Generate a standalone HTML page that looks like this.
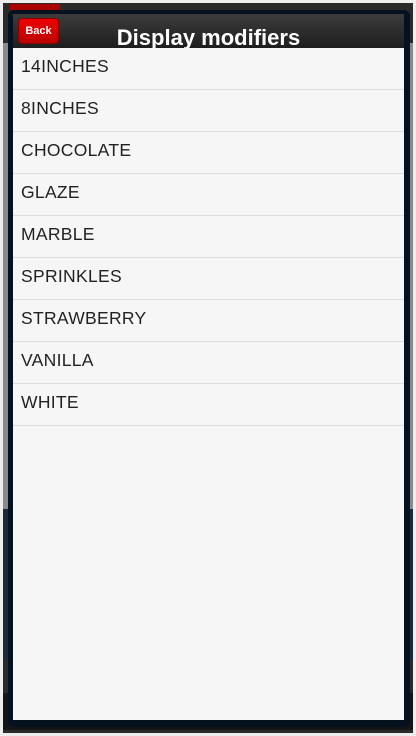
<!DOCTYPE html>
<html><head><style>
*{margin:0;padding:0;box-sizing:border-box}
body{width:416px;height:736px;background:#eee;position:relative;overflow:hidden;font-family:"Liberation Sans",Arial,sans-serif}
.bg{position:absolute;left:3px;top:3px;width:410px;height:730px;background:#2a2a2a}
.bg .mid{position:absolute;left:0;top:40px;width:410px;height:466px;background:#8a8a8a}
.bg .low{position:absolute;left:0;top:506px;width:410px;height:150px;background:#1b2a3a}
.bg .foot{position:absolute;left:0;top:690px;width:410px;height:37px;background:#151515}
.red{position:absolute;left:10px;top:4px;width:50px;height:6px;background:#a00}
.dlg{position:absolute;left:8px;top:10px;width:402px;height:717px;background:#03121e;border-radius:6px}
.hdr{position:absolute;left:13px;top:14px;width:391px;height:34px;background:linear-gradient(#3c3c3c,#1e1e1e)}
.back{position:absolute;left:18px;top:18px;width:41px;height:26px;background:linear-gradient(#e00,#b00);border:1px solid #800;border-radius:4px;color:#fff;font-weight:bold;font-size:11px;line-height:24px;text-align:center}
.title{position:absolute;left:13px;width:391px;top:24px;text-align:center;color:#fff;font-weight:bold;font-size:22px;line-height:27px;height:24px;overflow:hidden}
.list{position:absolute;left:13px;top:48px;width:391px;height:672px;background:#f6f6f6}
.row{height:42px;border-bottom:1px solid #ddd;padding-left:8px;line-height:37px;font-size:17.5px;letter-spacing:0.3px;color:#222}
</style></head><body>
<div class="bg"><div class="mid"></div><div class="low"></div><div class="foot"></div></div>
<div class="red"></div>
<div class="dlg"></div>
<div class="hdr"></div>
<div class="title">Display modifiers</div>
<div class="back">Back</div>
<div class="list">
<div class="row">14INCHES</div>
<div class="row">8INCHES</div>
<div class="row">CHOCOLATE</div>
<div class="row">GLAZE</div>
<div class="row">MARBLE</div>
<div class="row">SPRINKLES</div>
<div class="row">STRAWBERRY</div>
<div class="row">VANILLA</div>
<div class="row">WHITE</div>
</div>
</body></html>
